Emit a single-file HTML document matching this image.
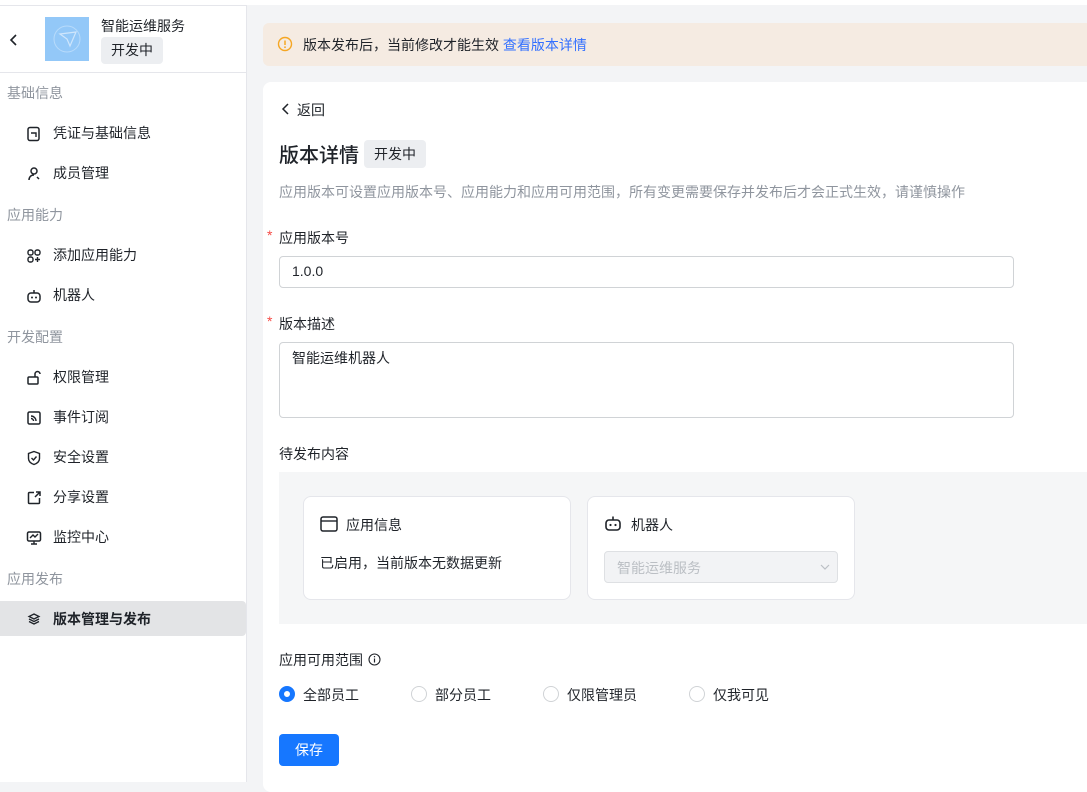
<!DOCTYPE html>
<html><head><meta charset="utf-8"><style>
*{box-sizing:border-box;margin:0;padding:0}
body{width:1087px;height:782px;overflow:hidden;background:#f3f4f6;font-family:"Liberation Sans","Noto Sans CJK SC",sans-serif;color:#1f2329;position:relative;font-size:14px}
.a{position:absolute}
.side{left:0;top:5px;width:247px;height:777px;background:#fff;border-right:1px solid #e5e6eb;border-top:1px solid #e5e6eb}
.grp{position:absolute;left:7px;font-size:14px;color:#8f959e}
.it{position:absolute;left:53px;font-size:14px;color:#1f2329}
.ic{position:absolute;left:26px;width:16px;height:16px}
.tag{background:#eceef1;border-radius:4px;font-size:14px;color:#1f2329;padding:0 10px;display:inline-block}
.radio{position:absolute;width:16px;height:16px;border-radius:50%;border:1px solid #d0d3d6;background:#fff}
.rl{position:absolute;font-size:14px}
</style></head><body>
<div class="a" style="left:0;top:0;width:1087px;height:5px;background:#fff"></div>
<div class="a side">
  <svg class="a" style="left:9px;top:27px" width="10" height="14" viewBox="0 0 10 14"><path d="M7 2L2 7l5 5" fill="none" stroke="#1f2329" stroke-width="1.6"/></svg>
  <div class="a" style="left:45px;top:11px;width:44px;height:44px;background:#93c8f8"><svg width="44" height="44" viewBox="0 0 44 44"><circle cx="22" cy="22" r="13" fill="none" stroke="#b8dbfb" stroke-width="1"/><path d="M15 17l16-2-6 14-3-7z" fill="none" stroke="#cfe6fc" stroke-width="1.2"/></svg></div>
  <div class="a" style="left:101px;top:10px;font-size:14px">智能运维服务</div>
  <div class="a tag" style="left:101px;top:31px;height:27px;line-height:27px">开发中</div>
  <div class="a" style="left:0;top:66px;width:246px;height:1px;background:#e5e6eb"></div>
  <div class="grp" style="top:77px">基础信息</div>
  <svg class="ic" style="top:120px" viewBox="0 0 16 16"><rect x="2" y="1.5" width="11" height="13" rx="2" fill="none" stroke="#1f2329" stroke-width="1.5"/><path d="M5 7h5v4" fill="none" stroke="#1f2329" stroke-width="1.4"/></svg>
  <div class="it" style="top:117px">凭证与基础信息</div>
  <svg class="ic" style="top:160px" viewBox="0 0 16 16"><circle cx="8" cy="5" r="3" fill="none" stroke="#1f2329" stroke-width="1.5"/><path d="M3 14c0-3 2-5 5-5M11 11l2 2" fill="none" stroke="#1f2329" stroke-width="1.5"/></svg>
  <div class="it" style="top:157px">成员管理</div>
  <div class="grp" style="top:199px">应用能力</div>
  <svg class="ic" style="top:242px" viewBox="0 0 16 16"><rect x="2" y="2" width="5" height="5" rx="2" fill="none" stroke="#1f2329" stroke-width="1.4"/><rect x="9" y="2" width="5" height="5" rx="2" fill="none" stroke="#1f2329" stroke-width="1.4"/><rect x="2" y="9" width="5" height="5" rx="2" fill="none" stroke="#1f2329" stroke-width="1.4"/><path d="M11.5 9v5M9 11.5h5" stroke="#1f2329" stroke-width="1.4"/></svg>
  <div class="it" style="top:239px">添加应用能力</div>
  <svg class="ic" style="top:282px" viewBox="0 0 16 16"><rect x="2" y="5" width="12" height="9" rx="3" fill="none" stroke="#1f2329" stroke-width="1.5"/><circle cx="6" cy="9.5" r="1" fill="#1f2329"/><circle cx="10" cy="9.5" r="1" fill="#1f2329"/><path d="M8 5V2" stroke="#1f2329" stroke-width="1.5"/></svg>
  <div class="it" style="top:279px">机器人</div>
  <div class="grp" style="top:321px">开发配置</div>
  <svg class="ic" style="top:364px" viewBox="0 0 16 16"><rect x="2" y="7" width="10" height="7" rx="1" fill="none" stroke="#1f2329" stroke-width="1.5"/><path d="M9 7V4a2.5 2.5 0 015 0" fill="none" stroke="#1f2329" stroke-width="1.5"/></svg>
  <div class="it" style="top:361px">权限管理</div>
  <svg class="ic" style="top:404px" viewBox="0 0 16 16"><rect x="2" y="2" width="12" height="12" rx="1.5" fill="none" stroke="#1f2329" stroke-width="1.5"/><path d="M5 6a5 5 0 015 5M5 8.5a2.5 2.5 0 012.5 2.5" fill="none" stroke="#1f2329" stroke-width="1.4"/></svg>
  <div class="it" style="top:401px">事件订阅</div>
  <svg class="ic" style="top:444px" viewBox="0 0 16 16"><path d="M8 1.5l5.5 2v5c0 3-2.5 5-5.5 6-3-1-5.5-3-5.5-6v-5z" fill="none" stroke="#1f2329" stroke-width="1.4"/><path d="M5.5 8l2 2 3-3.5" fill="none" stroke="#1f2329" stroke-width="1.4"/></svg>
  <div class="it" style="top:441px">安全设置</div>
  <svg class="ic" style="top:484px" viewBox="0 0 16 16"><path d="M8 2.5H3.5a1 1 0 00-1 1v9a1 1 0 001 1h9a1 1 0 001-1V8M9 7l5-5M10 2h4v4" fill="none" stroke="#1f2329" stroke-width="1.5"/></svg>
  <div class="it" style="top:481px">分享设置</div>
  <svg class="ic" style="top:524px" viewBox="0 0 16 16"><rect x="1.5" y="2" width="13" height="9" rx="1.5" fill="none" stroke="#1f2329" stroke-width="1.5"/><path d="M4 8l3-3 2 2 3-3M5 14h6M8 11v3" fill="none" stroke="#1f2329" stroke-width="1.4"/></svg>
  <div class="it" style="top:521px">监控中心</div>
  <div class="grp" style="top:563px">应用发布</div>
  <div class="a" style="left:0;top:595px;width:246px;height:35px;background:#e3e4e6;border-radius:0 4px 4px 0"></div>
  <svg class="ic" style="top:605px" viewBox="0 0 16 16"><path d="M8 3l5 2.5-5 2.5-5-2.5zM3 8l5 2.5L13 8M3 10.5l5 2.5 5-2.5" fill="none" stroke="#1f2329" stroke-width="1.3"/></svg>
  <div class="it" style="top:603px;font-weight:bold">版本管理与发布</div>
</div>

<div class="a" style="left:263px;top:23px;width:830px;height:43px;background:#f5ebe2;border-radius:6px"></div>
<svg class="a" style="left:277px;top:36px" width="16" height="16" viewBox="0 0 16 16"><circle cx="8" cy="8" r="6.5" fill="none" stroke="#f5a623" stroke-width="1.4"/><path d="M8 4.5v4.5" stroke="#f5a623" stroke-width="1.5"/><circle cx="8" cy="11.2" r=".9" fill="#f5a623"/></svg>
<div class="a" style="left:303px;top:35px">版本发布后，当前修改才能生效 <span style="color:#3370ff">查看版本详情</span></div>

<div class="a" style="left:263px;top:82px;width:830px;height:710px;background:#fff;border-radius:8px"></div>
<svg class="a" style="left:281px;top:102px" width="10" height="14" viewBox="0 0 10 14"><path d="M7 2L2 7l5 5" fill="none" stroke="#1f2329" stroke-width="1.5"/></svg>
<div class="a" style="left:297px;top:100px">返回</div>
<div class="a" style="left:279px;top:139px;font-size:20px;font-weight:500">版本详情</div>
<div class="a tag" style="left:364px;top:140px;height:28px;line-height:28px">开发中</div>
<div class="a" style="left:279px;top:182px;color:#8f959e;font-size:14px">应用版本可设置应用版本号、应用能力和应用可用范围，所有变更需要保存并发布后才会正式生效，请谨慎操作</div>
<div class="a" style="left:267px;top:227px;color:#f54a45">*</div>
<div class="a" style="left:279px;top:228px">应用版本号</div>
<div class="a" style="left:279px;top:256px;width:735px;height:32px;border:1px solid #d0d3d6;border-radius:4px;padding:6px 12px">1.0.0</div>
<div class="a" style="left:267px;top:313px;color:#f54a45">*</div>
<div class="a" style="left:279px;top:314px">版本描述</div>
<div class="a" style="left:279px;top:342px;width:735px;height:76px;border:1px solid #d0d3d6;border-radius:4px;padding:5px 12px">智能运维机器人</div>
<div class="a" style="left:279px;top:444px">待发布内容</div>
<div class="a" style="left:279px;top:472px;width:810px;height:152px;background:#f5f6f7"></div>
<div class="a" style="left:303px;top:496px;width:268px;height:104px;background:#fff;border:1px solid #e5e6eb;border-radius:8px"></div>
<svg class="a" style="left:320px;top:516px" width="18" height="16" viewBox="0 0 18 16"><rect x="1" y="1" width="16" height="14" rx="2" fill="none" stroke="#1f2329" stroke-width="1.5"/><path d="M1 5h16" stroke="#1f2329" stroke-width="1.4"/></svg>
<div class="a" style="left:346px;top:515px">应用信息</div>
<div class="a" style="left:320px;top:553px">已启用，当前版本无数据更新</div>
<div class="a" style="left:587px;top:496px;width:268px;height:104px;background:#fff;border:1px solid #e5e6eb;border-radius:8px"></div>
<svg class="a" style="left:604px;top:514px" width="18" height="18" viewBox="0 0 18 18"><rect x="2" y="6" width="14" height="10" rx="3" fill="none" stroke="#1f2329" stroke-width="1.6"/><circle cx="6.5" cy="11" r="1.1" fill="#1f2329"/><circle cx="11.5" cy="11" r="1.1" fill="#1f2329"/><path d="M9 6V2.5" stroke="#1f2329" stroke-width="1.6"/></svg>
<div class="a" style="left:631px;top:515px">机器人</div>
<div class="a" style="left:604px;top:551px;width:234px;height:32px;background:#f2f3f5;border:1px solid #dee0e3;border-radius:4px;padding:6px 12px;color:#bbbfc4">智能运维服务</div>
<svg class="a" style="left:819px;top:562px" width="12" height="10" viewBox="0 0 12 10"><path d="M2 3l4 4 4-4" fill="none" stroke="#bbbfc4" stroke-width="1.2"/></svg>
<div class="a" style="left:279px;top:650px">应用可用范围</div>
<svg class="a" style="left:368px;top:653px" width="13" height="13" viewBox="0 0 13 13"><circle cx="6.5" cy="6.5" r="5.5" fill="none" stroke="#1f2329" stroke-width="1.1"/><path d="M6.5 5.5v4" stroke="#1f2329" stroke-width="1.2"/><circle cx="6.5" cy="3.7" r=".7" fill="#1f2329"/></svg>
<div class="radio" style="left:279px;top:686px;border:5px solid #1677ff"></div>
<div class="rl" style="left:303px;top:685px">全部员工</div>
<div class="radio" style="left:411px;top:686px"></div>
<div class="rl" style="left:435px;top:685px">部分员工</div>
<div class="radio" style="left:543px;top:686px"></div>
<div class="rl" style="left:567px;top:685px">仅限管理员</div>
<div class="radio" style="left:689px;top:686px"></div>
<div class="rl" style="left:713px;top:685px">仅我可见</div>
<div class="a" style="left:279px;top:734px;width:60px;height:32px;background:#1677ff;border-radius:4px;color:#fff;text-align:center;line-height:32px">保存</div>
</body></html>
